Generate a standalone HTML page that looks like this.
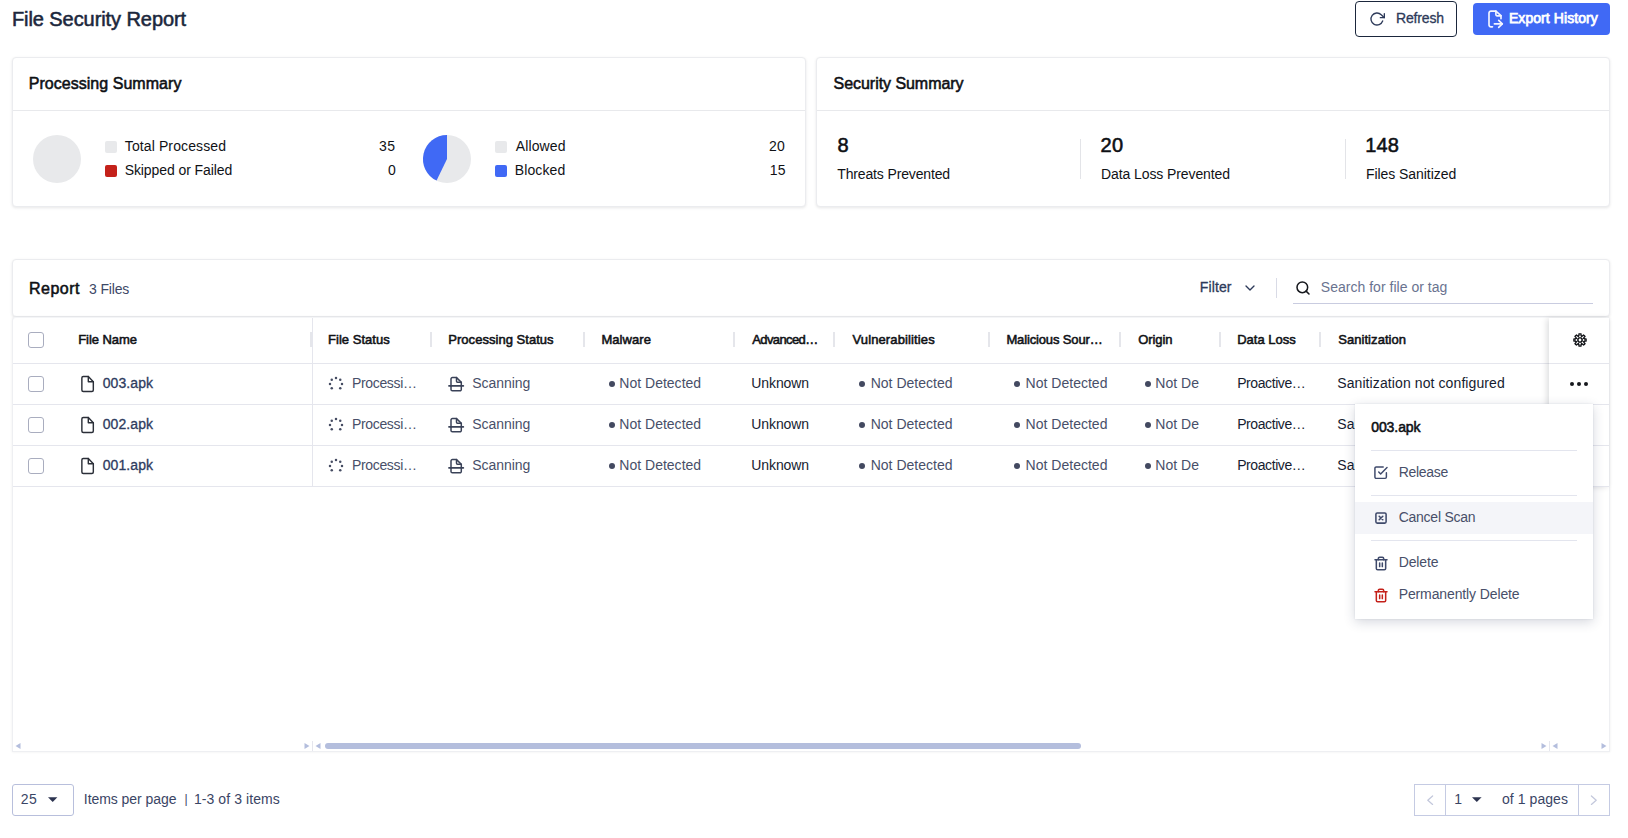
<!DOCTYPE html>
<html lang="en">
<head>
<meta charset="utf-8">
<title>File Security Report</title>
<style>
*{box-sizing:border-box;margin:0;padding:0}
html,body{width:1628px;height:838px;overflow:hidden;background:#fff}
body{font-family:"Liberation Sans",sans-serif;font-size:14px;color:#1b273c;position:relative}
.abs{position:absolute}
.t{position:absolute;white-space:nowrap;line-height:20px}
.btn{position:absolute;border-radius:4px}
.card{position:absolute;background:#fff;border:1px solid #ebecef;border-radius:4px;box-shadow:0 1px 3px rgba(20,22,30,.10)}
.card .hd{position:absolute;left:0;right:0;top:0;height:53px;border-bottom:1px solid #e8e9ec}
.sq{position:absolute;width:12px;height:12px;border-radius:2px}
svg{overflow:visible}
</style>
</head>
<body>
<div id="main">
<div class="btn" style="left:1355px;top:1px;width:102px;height:36px;border:1px solid #1b273c;background:#fff">
</div>
<div class="btn" style="left:1473px;top:3px;width:137px;height:32px;background:#4069f5">
</div>
<svg class="abs" style="left:1369px;top:11px" width="16" height="16" viewBox="0 0 24 24" fill="none" stroke-linecap="round" stroke-linejoin="round" stroke="#2d3a59" stroke-width="2">
<polyline points="23 4 23 10 17 10"/>
<path d="M20.49 15a9 9 0 1 1-2.12-9.36L23 10"/>
</svg>
<svg class="abs" style="left:1487px;top:9px" width="18" height="20" viewBox="0 0 18 20" fill="none" stroke-linecap="round" stroke-linejoin="round" stroke="#f3f5ff" stroke-width="1.65">
<path d="M5.5 17.85H4a2 2 0 0 1-2-2V4.1a2 2 0 0 1 2-2h4.9L14 6.6v3.1"/>
<path d="M8.9 2.1v3.7a1 1 0 0 0 1 1H14"/>
<path d="M7.4 14.9h7.8"/>
<path d="M11.7 11.4l3.6 3.5-3.6 3.5"/>
</svg>
<div class="card" style="left:12px;top:57px;width:794px;height:150px">
<div class="hd">
</div>
</div>
<div class="card" style="left:816px;top:57px;width:794px;height:150px">
<div class="hd">
</div>
</div>
<div class="abs" style="left:33px;top:135px;width:48px;height:48px;border-radius:50%;background:#e8e9eb">
</div>
<svg class="abs" style="left:423px;top:135px" width="48" height="48" viewBox="0 0 48 48" fill="none" stroke-linecap="round" stroke-linejoin="round" >
<circle cx="24" cy="24" r="24" fill="#e8e9eb"/>
<path d="M24 24V0A24 24 0 0 0 13.59 45.62Z" fill="#4069f5"/>
</svg>
<div class="sq" style="left:105px;top:141px;background:#e8e9eb">
</div>
<div class="sq" style="left:105px;top:165px;background:#c4211a">
</div>
<div class="sq" style="left:495px;top:141px;background:#e8e9eb">
</div>
<div class="sq" style="left:495px;top:165px;background:#4069f5">
</div>
<div class="abs" style="left:1080px;top:139px;width:1px;height:40px;background:#e3e4e8">
</div>
<div class="abs" style="left:1345px;top:139px;width:1px;height:40px;background:#e3e4e8">
</div>
<div class="card" style="left:12px;top:259px;width:1598px;height:58px">
</div>
<svg class="abs" style="left:1242px;top:280px" width="16" height="16" viewBox="0 0 24 24" fill="none" stroke-linecap="round" stroke-linejoin="round" stroke="#2d3a59" stroke-width="2">
<polyline points="6 9 12 15 18 9"/>
</svg>
<div class="abs" style="left:1276px;top:278px;width:1px;height:20px;background:#d9dbe6">
</div>
<svg class="abs" style="left:1295px;top:280px" width="16" height="16" viewBox="0 0 24 24" fill="none" stroke-linecap="round" stroke-linejoin="round" stroke="#16181d" stroke-width="2.3">
<circle cx="11" cy="11" r="8"/>
<line x1="21" y1="21" x2="16.65" y2="16.65"/>
</svg>
<div class="abs" style="left:1293px;top:303px;width:300px;height:1px;background:#c9cce0">
</div>
<div class="abs" id="tbl" style="left:12px;top:317px;width:1598px;height:435px;border:1px solid #eeeff2;border-top-color:#f4f5f7;border-radius:4px 4px 0 0;background:#fff;box-shadow:0 0 3px rgba(20,22,30,.07)">
</div>
<div class="abs" style="left:13px;top:363px;width:1596px;height:1px;background:#e5e6ed">
</div>
<div class="abs" style="left:13px;top:404px;width:1596px;height:1px;background:#e5e6ed">
</div>
<div class="abs" style="left:13px;top:445px;width:1596px;height:1px;background:#e5e6ed">
</div>
<div class="abs" style="left:13px;top:486px;width:1596px;height:1px;background:#e5e6ed">
</div>
<div class="abs" style="left:312px;top:318px;width:1px;height:169px;background:#e5e6ed">
</div>
<div class="abs" style="left:309.5px;top:332px;width:2px;height:15px;background:#e5e6eb">
</div>
<div class="abs" style="left:429.5px;top:332px;width:2px;height:15px;background:#e5e6eb">
</div>
<div class="abs" style="left:583px;top:332px;width:2px;height:15px;background:#e5e6eb">
</div>
<div class="abs" style="left:733px;top:332px;width:2px;height:15px;background:#e5e6eb">
</div>
<div class="abs" style="left:833px;top:332px;width:2px;height:15px;background:#e5e6eb">
</div>
<div class="abs" style="left:988px;top:332px;width:2px;height:15px;background:#e5e6eb">
</div>
<div class="abs" style="left:1119px;top:332px;width:2px;height:15px;background:#e5e6eb">
</div>
<div class="abs" style="left:1219px;top:332px;width:2px;height:15px;background:#e5e6eb">
</div>
<div class="abs" style="left:1319px;top:332px;width:2px;height:15px;background:#e5e6eb">
</div>
<div class="abs" style="left:28px;top:332px;width:16px;height:16px;border:1px solid #a9adbf;border-radius:3px;background:#fff">
</div>
<div class="abs" style="left:28px;top:376px;width:16px;height:16px;border:1px solid #a9adbf;border-radius:3px;background:#fff">
</div>
<div class="abs" style="left:28px;top:417px;width:16px;height:16px;border:1px solid #a9adbf;border-radius:3px;background:#fff">
</div>
<div class="abs" style="left:28px;top:458px;width:16px;height:16px;border:1px solid #a9adbf;border-radius:3px;background:#fff">
</div>
<svg class="abs" style="left:79.2px;top:374.75px" width="17.2" height="18" viewBox="0 0 24 24" fill="none" stroke-linecap="round" stroke-linejoin="round" stroke="#2b2f38" stroke-width="2" preserveAspectRatio="none">
<path d="M13 2H6a2 2 0 0 0-2 2v16a2 2 0 0 0 2 2h12a2 2 0 0 0 2-2V9z"/>
<polyline points="13 2 13 9 20 9"/>
</svg>
<svg class="abs" style="left:328px;top:375.9px" width="16" height="16" viewBox="0 0 16 16" stroke-linecap="round" stroke-linejoin="round" fill="#464d63">
<circle cx="8.00" cy="2.00" r="1.25"/>
<circle cx="12.24" cy="3.76" r="1.25"/>
<circle cx="14.00" cy="8.00" r="1.25"/>
<circle cx="12.24" cy="12.24" r="1.25"/>
<circle cx="3.76" cy="12.24" r="1.25"/>
<circle cx="2.00" cy="8.00" r="1.25"/>
<circle cx="3.76" cy="3.76" r="1.25"/>
</svg>
<svg class="abs" style="left:447px;top:376px" width="18" height="16" viewBox="0 0 18 16" fill="none" stroke-linecap="round" stroke-linejoin="round" stroke="#3a4258" stroke-width="1.5">
<path d="M4 9.9V3a1.4 1.4 0 0 1 1.4-1.4H9.5L14.3 6.3V9.9"/>
<path d="M9.5 1.6v3.7a1 1 0 0 0 1 1h3.8"/>
<path d="M1.9 9.9H16.4" stroke-width="1.6"/>
<path d="M4 9.9v3.5a1.4 1.4 0 0 0 1.4 1.4h7.5a1.4 1.4 0 0 0 1.4-1.4V9.9"/>
</svg>
<div class="abs" style="left:609.0px;top:381px;width:6px;height:6px;border-radius:50%;background:#434960">
</div>
<div class="abs" style="left:859.2px;top:381px;width:6px;height:6px;border-radius:50%;background:#434960">
</div>
<div class="abs" style="left:1014.2px;top:381px;width:6px;height:6px;border-radius:50%;background:#434960">
</div>
<div class="abs" style="left:1145.0px;top:381px;width:6px;height:6px;border-radius:50%;background:#434960">
</div>
<svg class="abs" style="left:79.2px;top:415.75px" width="17.2" height="18" viewBox="0 0 24 24" fill="none" stroke-linecap="round" stroke-linejoin="round" stroke="#2b2f38" stroke-width="2" preserveAspectRatio="none">
<path d="M13 2H6a2 2 0 0 0-2 2v16a2 2 0 0 0 2 2h12a2 2 0 0 0 2-2V9z"/>
<polyline points="13 2 13 9 20 9"/>
</svg>
<svg class="abs" style="left:328px;top:416.9px" width="16" height="16" viewBox="0 0 16 16" stroke-linecap="round" stroke-linejoin="round" fill="#464d63">
<circle cx="8.00" cy="2.00" r="1.25"/>
<circle cx="12.24" cy="3.76" r="1.25"/>
<circle cx="14.00" cy="8.00" r="1.25"/>
<circle cx="12.24" cy="12.24" r="1.25"/>
<circle cx="3.76" cy="12.24" r="1.25"/>
<circle cx="2.00" cy="8.00" r="1.25"/>
<circle cx="3.76" cy="3.76" r="1.25"/>
</svg>
<svg class="abs" style="left:447px;top:417px" width="18" height="16" viewBox="0 0 18 16" fill="none" stroke-linecap="round" stroke-linejoin="round" stroke="#3a4258" stroke-width="1.5">
<path d="M4 9.9V3a1.4 1.4 0 0 1 1.4-1.4H9.5L14.3 6.3V9.9"/>
<path d="M9.5 1.6v3.7a1 1 0 0 0 1 1h3.8"/>
<path d="M1.9 9.9H16.4" stroke-width="1.6"/>
<path d="M4 9.9v3.5a1.4 1.4 0 0 0 1.4 1.4h7.5a1.4 1.4 0 0 0 1.4-1.4V9.9"/>
</svg>
<div class="abs" style="left:609.0px;top:422px;width:6px;height:6px;border-radius:50%;background:#434960">
</div>
<div class="abs" style="left:859.2px;top:422px;width:6px;height:6px;border-radius:50%;background:#434960">
</div>
<div class="abs" style="left:1014.2px;top:422px;width:6px;height:6px;border-radius:50%;background:#434960">
</div>
<div class="abs" style="left:1145.0px;top:422px;width:6px;height:6px;border-radius:50%;background:#434960">
</div>
<svg class="abs" style="left:79.2px;top:456.75px" width="17.2" height="18" viewBox="0 0 24 24" fill="none" stroke-linecap="round" stroke-linejoin="round" stroke="#2b2f38" stroke-width="2" preserveAspectRatio="none">
<path d="M13 2H6a2 2 0 0 0-2 2v16a2 2 0 0 0 2 2h12a2 2 0 0 0 2-2V9z"/>
<polyline points="13 2 13 9 20 9"/>
</svg>
<svg class="abs" style="left:328px;top:457.9px" width="16" height="16" viewBox="0 0 16 16" stroke-linecap="round" stroke-linejoin="round" fill="#464d63">
<circle cx="8.00" cy="2.00" r="1.25"/>
<circle cx="12.24" cy="3.76" r="1.25"/>
<circle cx="14.00" cy="8.00" r="1.25"/>
<circle cx="12.24" cy="12.24" r="1.25"/>
<circle cx="3.76" cy="12.24" r="1.25"/>
<circle cx="2.00" cy="8.00" r="1.25"/>
<circle cx="3.76" cy="3.76" r="1.25"/>
</svg>
<svg class="abs" style="left:447px;top:458px" width="18" height="16" viewBox="0 0 18 16" fill="none" stroke-linecap="round" stroke-linejoin="round" stroke="#3a4258" stroke-width="1.5">
<path d="M4 9.9V3a1.4 1.4 0 0 1 1.4-1.4H9.5L14.3 6.3V9.9"/>
<path d="M9.5 1.6v3.7a1 1 0 0 0 1 1h3.8"/>
<path d="M1.9 9.9H16.4" stroke-width="1.6"/>
<path d="M4 9.9v3.5a1.4 1.4 0 0 0 1.4 1.4h7.5a1.4 1.4 0 0 0 1.4-1.4V9.9"/>
</svg>
<div class="abs" style="left:609.0px;top:463px;width:6px;height:6px;border-radius:50%;background:#434960">
</div>
<div class="abs" style="left:859.2px;top:463px;width:6px;height:6px;border-radius:50%;background:#434960">
</div>
<div class="abs" style="left:1014.2px;top:463px;width:6px;height:6px;border-radius:50%;background:#434960">
</div>
<div class="abs" style="left:1145.0px;top:463px;width:6px;height:6px;border-radius:50%;background:#434960">
</div>
<div class="abs" style="left:1549px;top:318px;width:60px;height:168px;background:#fff;box-shadow:-2px 1px 6px rgba(10,12,20,.14)">
</div>
<div class="abs" style="left:1549px;top:363px;width:60px;height:1px;background:#e5e6ed">
</div>
<div class="abs" style="left:1549px;top:404px;width:60px;height:1px;background:#e5e6ed">
</div>
<div class="abs" style="left:1549px;top:445px;width:60px;height:1px;background:#e5e6ed">
</div>
<div class="abs" style="left:1549px;top:486px;width:60px;height:1px;background:#e5e6ed">
</div>
<svg class="abs" style="left:1571.9px;top:331.9px" width="16" height="16" viewBox="0 0 16 16" fill="none" stroke-linecap="round" stroke-linejoin="round" stroke="#101216" stroke-width="1.3">
<path d="M6.98 3.57L6.93 1.94A6.15 6.15 0 0 1 9.07 1.94L9.02 3.57A4.55 4.55 0 0 1 10.41 4.14L10.41 4.14L11.53 2.96A6.15 6.15 0 0 1 13.04 4.47L11.86 5.59A4.55 4.55 0 0 1 12.43 6.98L12.43 6.98L14.06 6.93A6.15 6.15 0 0 1 14.06 9.07L12.43 9.02A4.55 4.55 0 0 1 11.86 10.41L11.86 10.41L13.04 11.53A6.15 6.15 0 0 1 11.53 13.04L10.41 11.86A4.55 4.55 0 0 1 9.02 12.43L9.02 12.43L9.07 14.06A6.15 6.15 0 0 1 6.93 14.06L6.98 12.43A4.55 4.55 0 0 1 5.59 11.86L5.59 11.86L4.47 13.04A6.15 6.15 0 0 1 2.96 11.53L4.14 10.41A4.55 4.55 0 0 1 3.57 9.02L3.57 9.02L1.94 9.07A6.15 6.15 0 0 1 1.94 6.93L3.57 6.98A4.55 4.55 0 0 1 4.14 5.59L4.14 5.59L2.96 4.47A6.15 6.15 0 0 1 4.47 2.96L5.59 4.14A4.55 4.55 0 0 1 6.98 3.57Z"/>
<circle cx="8" cy="8" r="2.1" stroke-width="1.4"/>
<g stroke-width="1">
<path d="M9.07 5.41L9.68 3.93"/>
<path d="M10.59 6.93L12.07 6.32"/>
<path d="M10.59 9.07L12.07 9.68"/>
<path d="M9.07 10.59L9.68 12.07"/>
<path d="M6.93 10.59L6.32 12.07"/>
<path d="M5.41 9.07L3.93 9.68"/>
<path d="M5.41 6.93L3.93 6.32"/>
<path d="M6.93 5.41L6.32 3.93"/>
</g>
</svg>
<div class="abs" style="left:1570px;top:382px;width:4px;height:4px;border-radius:50%;background:#16181d">
</div>
<div class="abs" style="left:1577px;top:382px;width:4px;height:4px;border-radius:50%;background:#16181d">
</div>
<div class="abs" style="left:1584px;top:382px;width:4px;height:4px;border-radius:50%;background:#16181d">
</div>
<svg class="abs" style="left:0;top:0" width="1628" height="760" fill="#b4bedd">
<polygon points="20.5,743 20.5,749 15.5,746"/>
<polygon points="304.5,743 304.5,749 309.5,746"/>
<polygon points="320.5,743 320.5,749 315.5,746"/>
<polygon points="1541.5,743 1541.5,749 1546.5,746"/>
<polygon points="1557.5,743 1557.5,749 1552.5,746"/>
<polygon points="1601.5,743 1601.5,749 1606.5,746"/>
</svg>
<div class="abs" style="left:325px;top:743px;width:756px;height:6px;border-radius:3px;background:#b4bedd">
</div>
<div class="abs" style="left:312px;top:741px;width:1px;height:10px;background:#e5e6ed">
</div>
<div class="abs" style="left:1549px;top:741px;width:1px;height:10px;background:#e5e6ed">
</div>
<span class="t" style="left:11.9px;top:9.0px;font-size:20px;letter-spacing:-0.07px;color:#1b273c;-webkit-text-stroke:0.55px currentColor;">File Security Report</span>
<span class="t" style="left:1396.0px;top:8.0px;font-size:14px;letter-spacing:-0.17px;color:#2d3a59;-webkit-text-stroke:0.3px currentColor;">Refresh</span>
<span class="t" style="left:1508.9px;top:8.0px;font-size:14px;letter-spacing:0.08px;color:#ffffff;-webkit-text-stroke:0.75px currentColor;">Export History</span>
<span class="t" style="left:28.7px;top:74.0px;font-size:16px;letter-spacing:0.04px;color:#0e1014;-webkit-text-stroke:0.55px currentColor;">Processing Summary</span>
<span class="t" style="left:833.6px;top:74.0px;font-size:16px;letter-spacing:-0.05px;color:#0e1014;-webkit-text-stroke:0.55px currentColor;">Security Summary</span>
<span class="t" style="left:124.8px;top:136.4px;font-size:14px;letter-spacing:0.11px;color:#101216;">Total Processed</span>
<span class="t" style="left:124.7px;top:160.4px;font-size:14px;letter-spacing:-0.09px;color:#101216;">Skipped or Failed</span>
<span class="t" style="left:379.1px;top:136.4px;font-size:14px;letter-spacing:0.40px;color:#101216;">35</span>
<span class="t" style="left:388.1px;top:160.4px;font-size:14px;letter-spacing:0.00px;color:#101216;">0</span>
<span class="t" style="left:515.8px;top:136.4px;font-size:14px;letter-spacing:0.10px;color:#101216;">Allowed</span>
<span class="t" style="left:514.8px;top:160.4px;font-size:14px;letter-spacing:0.10px;color:#101216;">Blocked</span>
<span class="t" style="left:768.9px;top:136.4px;font-size:14px;letter-spacing:0.40px;color:#101216;">20</span>
<span class="t" style="left:769.7px;top:160.4px;font-size:14px;letter-spacing:0.40px;color:#101216;">15</span>
<span class="t" style="left:837.5px;top:134.5px;font-size:20px;letter-spacing:0.00px;color:#0e1014;-webkit-text-stroke:0.55px currentColor;">8</span>
<span class="t" style="left:1100.4px;top:134.5px;font-size:20px;letter-spacing:0.40px;color:#0e1014;-webkit-text-stroke:0.55px currentColor;">20</span>
<span class="t" style="left:1365.3px;top:134.5px;font-size:20px;letter-spacing:0.15px;color:#0e1014;-webkit-text-stroke:0.55px currentColor;">148</span>
<span class="t" style="left:837.3px;top:163.5px;font-size:14px;letter-spacing:-0.15px;color:#101216;">Threats Prevented</span>
<span class="t" style="left:1101.1px;top:163.5px;font-size:14px;letter-spacing:-0.10px;color:#101216;">Data Loss Prevented</span>
<span class="t" style="left:1366.0px;top:163.5px;font-size:14px;letter-spacing:-0.06px;color:#101216;">Files Sanitized</span>
<span class="t" style="left:28.9px;top:279.3px;font-size:16px;letter-spacing:0.52px;color:#0e1014;-webkit-text-stroke:0.55px currentColor;">Report</span>
<span class="t" style="left:89.1px;top:279.3px;font-size:14px;letter-spacing:-0.17px;color:#3d4866;">3 Files</span>
<span class="t" style="left:1199.8px;top:276.6px;font-size:14px;letter-spacing:0.12px;color:#2d3a59;-webkit-text-stroke:0.3px currentColor;">Filter</span>
<span class="t" style="left:1320.8px;top:276.6px;font-size:14px;letter-spacing:0.02px;color:#6a7390;">Search for file or tag</span>
<span class="t" style="left:78.2px;top:330.0px;font-size:13px;letter-spacing:-0.06px;color:#101216;-webkit-text-stroke:0.55px currentColor;">File Name</span>
<span class="t" style="left:328.1px;top:330.0px;font-size:13px;letter-spacing:0.02px;color:#101216;-webkit-text-stroke:0.55px currentColor;">File Status</span>
<span class="t" style="left:448.3px;top:330.0px;font-size:13px;letter-spacing:0.03px;color:#101216;-webkit-text-stroke:0.55px currentColor;">Processing Status</span>
<span class="t" style="left:601.4px;top:330.0px;font-size:13px;letter-spacing:0.07px;color:#101216;-webkit-text-stroke:0.55px currentColor;">Malware</span>
<span class="t" style="left:752.3px;top:330.0px;font-size:13px;letter-spacing:-0.62px;color:#101216;-webkit-text-stroke:0.55px currentColor;">Advanced…</span>
<span class="t" style="left:852.5px;top:330.0px;font-size:13px;letter-spacing:0.12px;color:#101216;-webkit-text-stroke:0.55px currentColor;">Vulnerabilities</span>
<span class="t" style="left:1006.4px;top:330.0px;font-size:13px;letter-spacing:-0.14px;color:#101216;-webkit-text-stroke:0.55px currentColor;">Malicious Sour…</span>
<span class="t" style="left:1138.2px;top:330.0px;font-size:13px;letter-spacing:-0.06px;color:#101216;-webkit-text-stroke:0.55px currentColor;">Origin</span>
<span class="t" style="left:1237.2px;top:330.0px;font-size:13px;letter-spacing:-0.01px;color:#101216;-webkit-text-stroke:0.55px currentColor;">Data Loss</span>
<span class="t" style="left:1338.2px;top:330.0px;font-size:13px;letter-spacing:0.06px;color:#101216;-webkit-text-stroke:0.55px currentColor;">Sanitization</span>
<span class="t" style="left:102.7px;top:373.0px;font-size:14px;letter-spacing:0.10px;color:#2e3b5e;-webkit-text-stroke:0.3px currentColor;">003.apk</span>
<span class="t" style="left:352.0px;top:373.0px;font-size:14px;letter-spacing:-0.34px;color:#484f69;">Processi…</span>
<span class="t" style="left:472.2px;top:373.0px;font-size:14px;letter-spacing:-0.04px;color:#484f69;">Scanning</span>
<span class="t" style="left:619.3px;top:373.0px;font-size:14px;letter-spacing:0.01px;color:#484f69;">Not Detected</span>
<span class="t" style="left:751.3px;top:373.0px;font-size:14px;letter-spacing:-0.10px;color:#161c30;">Unknown</span>
<span class="t" style="left:870.7px;top:373.0px;font-size:14px;letter-spacing:0.01px;color:#484f69;">Not Detected</span>
<span class="t" style="left:1025.6px;top:373.0px;font-size:14px;letter-spacing:0.01px;color:#484f69;">Not Detected</span>
<div class="abs" style="left:0;top:373.0px;width:1199.3px;height:20px;overflow:hidden">
<span class="t" style="left:1155.3px;top:0;font-size:14px;letter-spacing:0.01px;color:#484f69;">Not Detected</span>
</div>
<span class="t" style="left:1237.2px;top:373.0px;font-size:14px;letter-spacing:-0.42px;color:#161c30;">Proactive…</span>
<span class="t" style="left:1337.2px;top:373.0px;font-size:14px;letter-spacing:0.10px;color:#161c30;">Sanitization not configured</span>
<span class="t" style="left:102.7px;top:414.0px;font-size:14px;letter-spacing:0.10px;color:#2e3b5e;-webkit-text-stroke:0.3px currentColor;">002.apk</span>
<span class="t" style="left:352.0px;top:414.0px;font-size:14px;letter-spacing:-0.34px;color:#484f69;">Processi…</span>
<span class="t" style="left:472.2px;top:414.0px;font-size:14px;letter-spacing:-0.04px;color:#484f69;">Scanning</span>
<span class="t" style="left:619.3px;top:414.0px;font-size:14px;letter-spacing:0.01px;color:#484f69;">Not Detected</span>
<span class="t" style="left:751.3px;top:414.0px;font-size:14px;letter-spacing:-0.10px;color:#161c30;">Unknown</span>
<span class="t" style="left:870.7px;top:414.0px;font-size:14px;letter-spacing:0.01px;color:#484f69;">Not Detected</span>
<span class="t" style="left:1025.6px;top:414.0px;font-size:14px;letter-spacing:0.01px;color:#484f69;">Not Detected</span>
<div class="abs" style="left:0;top:414.0px;width:1199.3px;height:20px;overflow:hidden">
<span class="t" style="left:1155.3px;top:0;font-size:14px;letter-spacing:0.01px;color:#484f69;">Not Detected</span>
</div>
<span class="t" style="left:1237.2px;top:414.0px;font-size:14px;letter-spacing:-0.42px;color:#161c30;">Proactive…</span>
<span class="t" style="left:1337.2px;top:414.0px;font-size:14px;letter-spacing:0.10px;color:#161c30;">Sanitization not configured</span>
<span class="t" style="left:102.7px;top:455.0px;font-size:14px;letter-spacing:0.10px;color:#2e3b5e;-webkit-text-stroke:0.3px currentColor;">001.apk</span>
<span class="t" style="left:352.0px;top:455.0px;font-size:14px;letter-spacing:-0.34px;color:#484f69;">Processi…</span>
<span class="t" style="left:472.2px;top:455.0px;font-size:14px;letter-spacing:-0.04px;color:#484f69;">Scanning</span>
<span class="t" style="left:619.3px;top:455.0px;font-size:14px;letter-spacing:0.01px;color:#484f69;">Not Detected</span>
<span class="t" style="left:751.3px;top:455.0px;font-size:14px;letter-spacing:-0.10px;color:#161c30;">Unknown</span>
<span class="t" style="left:870.7px;top:455.0px;font-size:14px;letter-spacing:0.01px;color:#484f69;">Not Detected</span>
<span class="t" style="left:1025.6px;top:455.0px;font-size:14px;letter-spacing:0.01px;color:#484f69;">Not Detected</span>
<div class="abs" style="left:0;top:455.0px;width:1199.3px;height:20px;overflow:hidden">
<span class="t" style="left:1155.3px;top:0;font-size:14px;letter-spacing:0.01px;color:#484f69;">Not Detected</span>
</div>
<span class="t" style="left:1237.2px;top:455.0px;font-size:14px;letter-spacing:-0.42px;color:#161c30;">Proactive…</span>
<span class="t" style="left:1337.2px;top:455.0px;font-size:14px;letter-spacing:0.10px;color:#161c30;">Sanitization not configured</span>
</div>
<div id="popup">
<div class="abs" style="left:1355px;top:404px;width:238px;height:215px;background:#fff;box-shadow:0 3px 11px rgba(30,40,80,.19),0 0 2px rgba(30,40,80,.10)">
</div>
<div class="abs" style="left:1355px;top:502px;width:238px;height:32px;background:#f4f5f9">
</div>
<div class="abs" style="left:1371px;top:450px;width:206px;height:1px;background:#e3e5ee">
</div>
<div class="abs" style="left:1371px;top:495px;width:206px;height:1px;background:#e3e5ee">
</div>
<div class="abs" style="left:1371px;top:540px;width:206px;height:1px;background:#e3e5ee">
</div>
<svg class="abs" style="left:1373.2px;top:464.9px" width="15.3" height="15.3" viewBox="0 0 24 24" fill="none" stroke-linecap="round" stroke-linejoin="round" stroke="#3f4a6b" stroke-width="2.3">
<polyline points="9 11 12 14 22 4"/>
<path d="M21 12v7a2 2 0 0 1-2 2H5a2 2 0 0 1-2-2V5a2 2 0 0 1 2-2h11"/>
</svg>
<svg class="abs" style="left:1373px;top:510px" width="16" height="16" viewBox="0 0 16 16" fill="none" stroke-linecap="round" stroke-linejoin="round" stroke="#3f4a6b" stroke-width="1.55">
<rect x="2.9" y="2.9" width="10.2" height="10.2" rx="1.3"/>
<path d="M6.2 6.2l3.6 3.6M9.8 6.2l-3.6 3.6"/>
</svg>
<svg class="abs" style="left:1373px;top:555.5px" width="16" height="15" viewBox="0 0 24 24" fill="none" stroke-linecap="round" stroke-linejoin="round" stroke="#3f4a6b" stroke-width="2.3" preserveAspectRatio="none">
<polyline points="3 6 5 6 21 6"/>
<path d="M19 6v14a2 2 0 0 1-2 2H7a2 2 0 0 1-2-2V6m3 0V4a2 2 0 0 1 2-2h4a2 2 0 0 1 2 2v2"/>
<line x1="10" y1="11" x2="10" y2="17"/>
<line x1="14" y1="11" x2="14" y2="17"/>
</svg>
<svg class="abs" style="left:1373px;top:587.5px" width="16" height="15" viewBox="0 0 24 24" fill="none" stroke-linecap="round" stroke-linejoin="round" stroke="#c4211a" stroke-width="2.3" preserveAspectRatio="none">
<polyline points="3 6 5 6 21 6"/>
<path d="M19 6v14a2 2 0 0 1-2 2H7a2 2 0 0 1-2-2V6m3 0V4a2 2 0 0 1 2-2h4a2 2 0 0 1 2 2v2"/>
<line x1="10" y1="11" x2="10" y2="17"/>
<line x1="14" y1="11" x2="14" y2="17"/>
</svg>
<span class="t" style="left:1371.2px;top:416.6px;font-size:14px;letter-spacing:-0.07px;color:#0e1014;-webkit-text-stroke:0.55px currentColor;">003.apk</span>
<span class="t" style="left:1398.8px;top:462.0px;font-size:14px;letter-spacing:-0.33px;color:#484f69;">Release</span>
<span class="t" style="left:1398.7px;top:507.1px;font-size:14px;letter-spacing:-0.25px;color:#484f69;">Cancel Scan</span>
<span class="t" style="left:1398.7px;top:552.1px;font-size:14px;letter-spacing:-0.14px;color:#484f69;">Delete</span>
<span class="t" style="left:1398.7px;top:584.1px;font-size:14px;letter-spacing:-0.12px;color:#484f69;">Permanently Delete</span>
</div>
<div id="footer">
<div class="abs" style="left:12px;top:784px;width:62px;height:32px;border:1px solid #b8bfdc;border-radius:3px;background:#fff">
</div>
<div class="abs" style="left:1414px;top:784px;width:196px;height:32px;border:1px solid #c5cbe3;background:#fff">
</div>
<div class="abs" style="left:1445px;top:785px;width:1px;height:30px;background:#c5cbe3">
</div>
<div class="abs" style="left:1578px;top:785px;width:1px;height:30px;background:#c5cbe3">
</div>
<svg class="abs" style="left:0;top:780px" width="1628" height="40" fill="none" stroke="#c3c8dc" stroke-width="1.3" stroke-linecap="round" stroke-linejoin="round">
<polyline points="1432.6,16 1427.8,20.2 1432.6,24.4"/>
<polyline points="1591.4,16 1596.2,20.2 1591.4,24.4"/>
</svg>
<svg class="abs" style="left:0;top:780px" width="1628" height="40" fill="#2d3450">
<polygon points="48,17.3 57.4,17.3 52.7,22"/>
<polygon points="1472,17.3 1481.6,17.3 1476.8,22"/>
</svg>
<span class="t" style="left:20.8px;top:789.0px;font-size:14px;letter-spacing:0.40px;color:#3a4565;">25</span>
<span class="t" style="left:83.8px;top:789.0px;font-size:14px;letter-spacing:-0.05px;color:#3a4565;">Items per page</span>
<span class="t" style="left:184.5px;top:789.0px;font-size:12px;letter-spacing:0.00px;color:#3a4565;">|</span>
<span class="t" style="left:193.9px;top:789.0px;font-size:14px;letter-spacing:0.08px;color:#3a4565;">1-3 of 3 items</span>
<span class="t" style="left:1454.2px;top:789.0px;font-size:14px;letter-spacing:0.00px;color:#3a4565;">1</span>
<span class="t" style="left:1502.0px;top:789.0px;font-size:14px;letter-spacing:0.06px;color:#3a4565;">of 1 pages</span>
</div>
</body>
</html>
